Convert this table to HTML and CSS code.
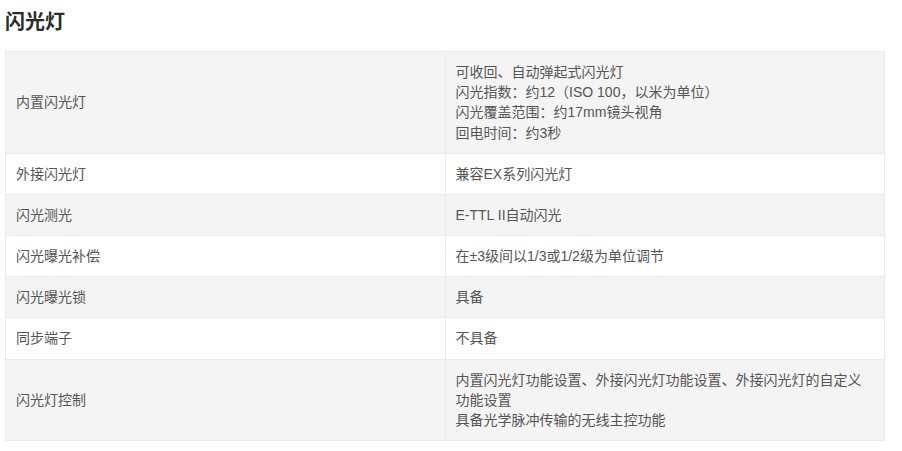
FILE: index.html
```html
<!DOCTYPE html>
<html lang="zh-CN">
<head>
<meta charset="utf-8">
<title>闪光灯</title>
<link rel="stylesheet" href="styles.css">
</head>
<body>
<div class="page">
  <h2 class="title">闪光灯</h2>
  <table class="spec">
    <tbody>
      <tr>
        <td>内置闪光灯</td>
        <td>可收回、自动弹起式闪光灯<br>闪光指数：约12（ISO 100，以米为单位）<br>闪光覆盖范围：约17mm镜头视角<br>回电时间：约3秒</td>
      </tr>
      <tr>
        <td>外接闪光灯</td>
        <td>兼容EX系列闪光灯</td>
      </tr>
      <tr>
        <td>闪光测光</td>
        <td>E-TTL II自动闪光</td>
      </tr>
      <tr>
        <td>闪光曝光补偿</td>
        <td>在±3级间以1/3或1/2级为单位调节</td>
      </tr>
      <tr>
        <td>闪光曝光锁</td>
        <td>具备</td>
      </tr>
      <tr>
        <td>同步端子</td>
        <td>不具备</td>
      </tr>
      <tr>
        <td>闪光灯控制</td>
        <td>内置闪光灯功能设置、外接闪光灯功能设置、外接闪光灯的自定义功能设置<br>具备光学脉冲传输的无线主控功能</td>
      </tr>
    </tbody>
  </table>
</div>
</body>
</html>
```

FILE: styles.css
```css
html, body {
  margin: 0;
  padding: 0;
  background: #fff;
}
.page {
  padding: 11px 5px 10px;
  width: 880px;
  font-family: "Liberation Sans", "Noto Sans CJK SC", sans-serif;
}
.title {
  margin: 0 0 17px 0;
  font-size: 20px;
  line-height: 23px;
  font-weight: bold;
  color: #2b2b2b;
}
.spec {
  width: 880px;
  border-collapse: collapse;
  table-layout: fixed;
  font-size: 14px;
  line-height: 20.17px;
  color: #555;
}
.spec td {
  width: 50%;
  padding: 10px;
  border: 1px solid #eaeaea;
  vertical-align: middle;
}
.spec tr:nth-child(odd) td {
  background: #f4f4f4;
}
.spec tr:nth-child(even) td {
  background: #fff;
}
```
